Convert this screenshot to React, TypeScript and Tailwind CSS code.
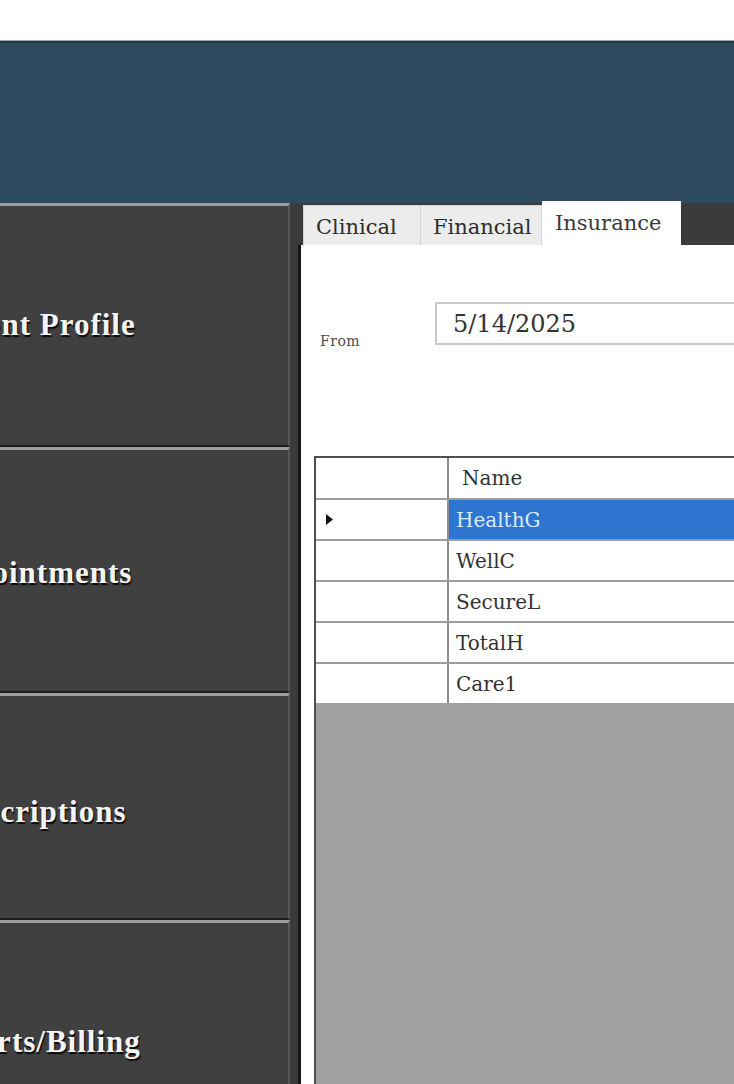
import React from "react";

const navItems = [
  { label: "Patient Profile", h: "h-[244px]", pt: "pt-0" },
  { label: "Appointments", h: "h-[246px]", pt: "pt-[6px]" },
  { label: "Prescriptions", h: "h-[227px]", pt: "pt-[10px]" },
  { label: "Reports/Billing", h: "h-[244px]", pt: "pt-0" },
];

const rows = ["HealthG", "WellC", "SecureL", "TotalH", "Care1"];

export default function App() {
  return (
    <div className="w-[734px] h-[1084px] overflow-hidden bg-white font-['DejaVu_Serif',serif]">
      <div className="h-[40px] bg-white" />
      <div className="h-[163px] bg-[#2d4a5f] border-t border-t-[#9aa8b1] shadow-[inset_0_2px_0_#22394a]" />
      <div className="flex h-[881px] bg-[#3b3b3b]">
        <div className="w-[513px] -ml-[223px] shrink-0 flex flex-col">
          {navItems.map((n) => (
            <div
              key={n.label}
              className={`${n.h} ${n.pt} shrink-0 flex items-center justify-center bg-[#404040] border-t-[3px] border-t-[#9d9d9d] border-b-2 border-b-[#1c1c1c] border-r-2 border-r-[#585858]`}
            >
              <span className="font-['Liberation_Serif',serif] font-bold text-[31px] tracking-[1px] text-[#f4f4f4] [text-shadow:1px_2px_1px_#0a0a0a] whitespace-nowrap">
                {n.label}
              </span>
            </div>
          ))}
        </div>
        <div className="flex-1 flex flex-col min-w-0">
          <div className="h-[42px] shrink-0 flex items-end pl-[13px]">
            <div className="w-[118px] h-[40px] shrink-0 bg-[#ececec] border border-[#d4d4d4] border-b-0 pl-[12px] pt-[8px] text-[21px] leading-[26px] text-[#2e2e2e]">
              Clinical
            </div>
            <div className="w-[121px] h-[40px] shrink-0 bg-[#ececec] border-t border-r border-[#d4d4d4] pl-[12px] pt-[8px] text-[21px] leading-[26px] text-[#2e2e2e]">
              Financial
            </div>
            <div className="w-[139px] h-[46px] shrink-0 -mb-[2px] bg-white pl-[13px] pt-[9px] text-[21px] leading-[26px] text-[#3a3a3a] relative z-10">
              Insurance
            </div>
          </div>
          <div className="flex-1 ml-[8px] border-l-[3px] border-l-[#161616] bg-white flex flex-col min-w-0">
            <div className="flex items-start mt-[57px] pl-[19px] shrink-0">
              <div className="w-[115px] shrink-0 mt-[29px] text-[14px] tracking-[0.5px] text-[#4a4a4a]">
                From
              </div>
              <div className="flex-1 h-[43px] border-2 border-[#c9c9c9] border-r-0 flex items-center pl-[16px] text-[24px] text-[#333]">
                5/14/2025
              </div>
            </div>
            <div className="mt-[104px] ml-[13px] flex-1 flex flex-col border-t-2 border-l-2 border-[#4e4e4e] bg-[#a0a0a0]">
              <div className="flex h-[42px] bg-white border-b-2 border-[#9d9d9d] shrink-0">
                <div className="w-[133px] shrink-0 border-r-2 border-[#8c8c8c]" />
                <div className="flex-1 flex items-center pl-[13px] text-[20px] text-[#333]">Name</div>
              </div>
              {rows.map((r, i) => (
                <div key={r} className="flex h-[41px] bg-white border-b-2 border-[#9d9d9d] shrink-0">
                  <div className="w-[133px] shrink-0 border-r-2 border-[#8c8c8c] flex items-center pl-[10px]">
                    {i === 0 && (
                      <svg width="7" height="11" viewBox="0 0 7 11">
                        <polygon points="0,0 7,5.5 0,11" fill="#111" />
                      </svg>
                    )}
                  </div>
                  <div
                    className={`flex-1 flex items-center pl-[7px] text-[20px] ${
                      i === 0 ? "bg-[#2f74cf] text-[#d7ebff]" : "text-[#333]"
                    }`}
                  >
                    {r}
                  </div>
                </div>
              ))}
              <div className="flex-1 bg-[#a0a0a0]" />
            </div>
          </div>
        </div>
      </div>
    </div>
  );
}
